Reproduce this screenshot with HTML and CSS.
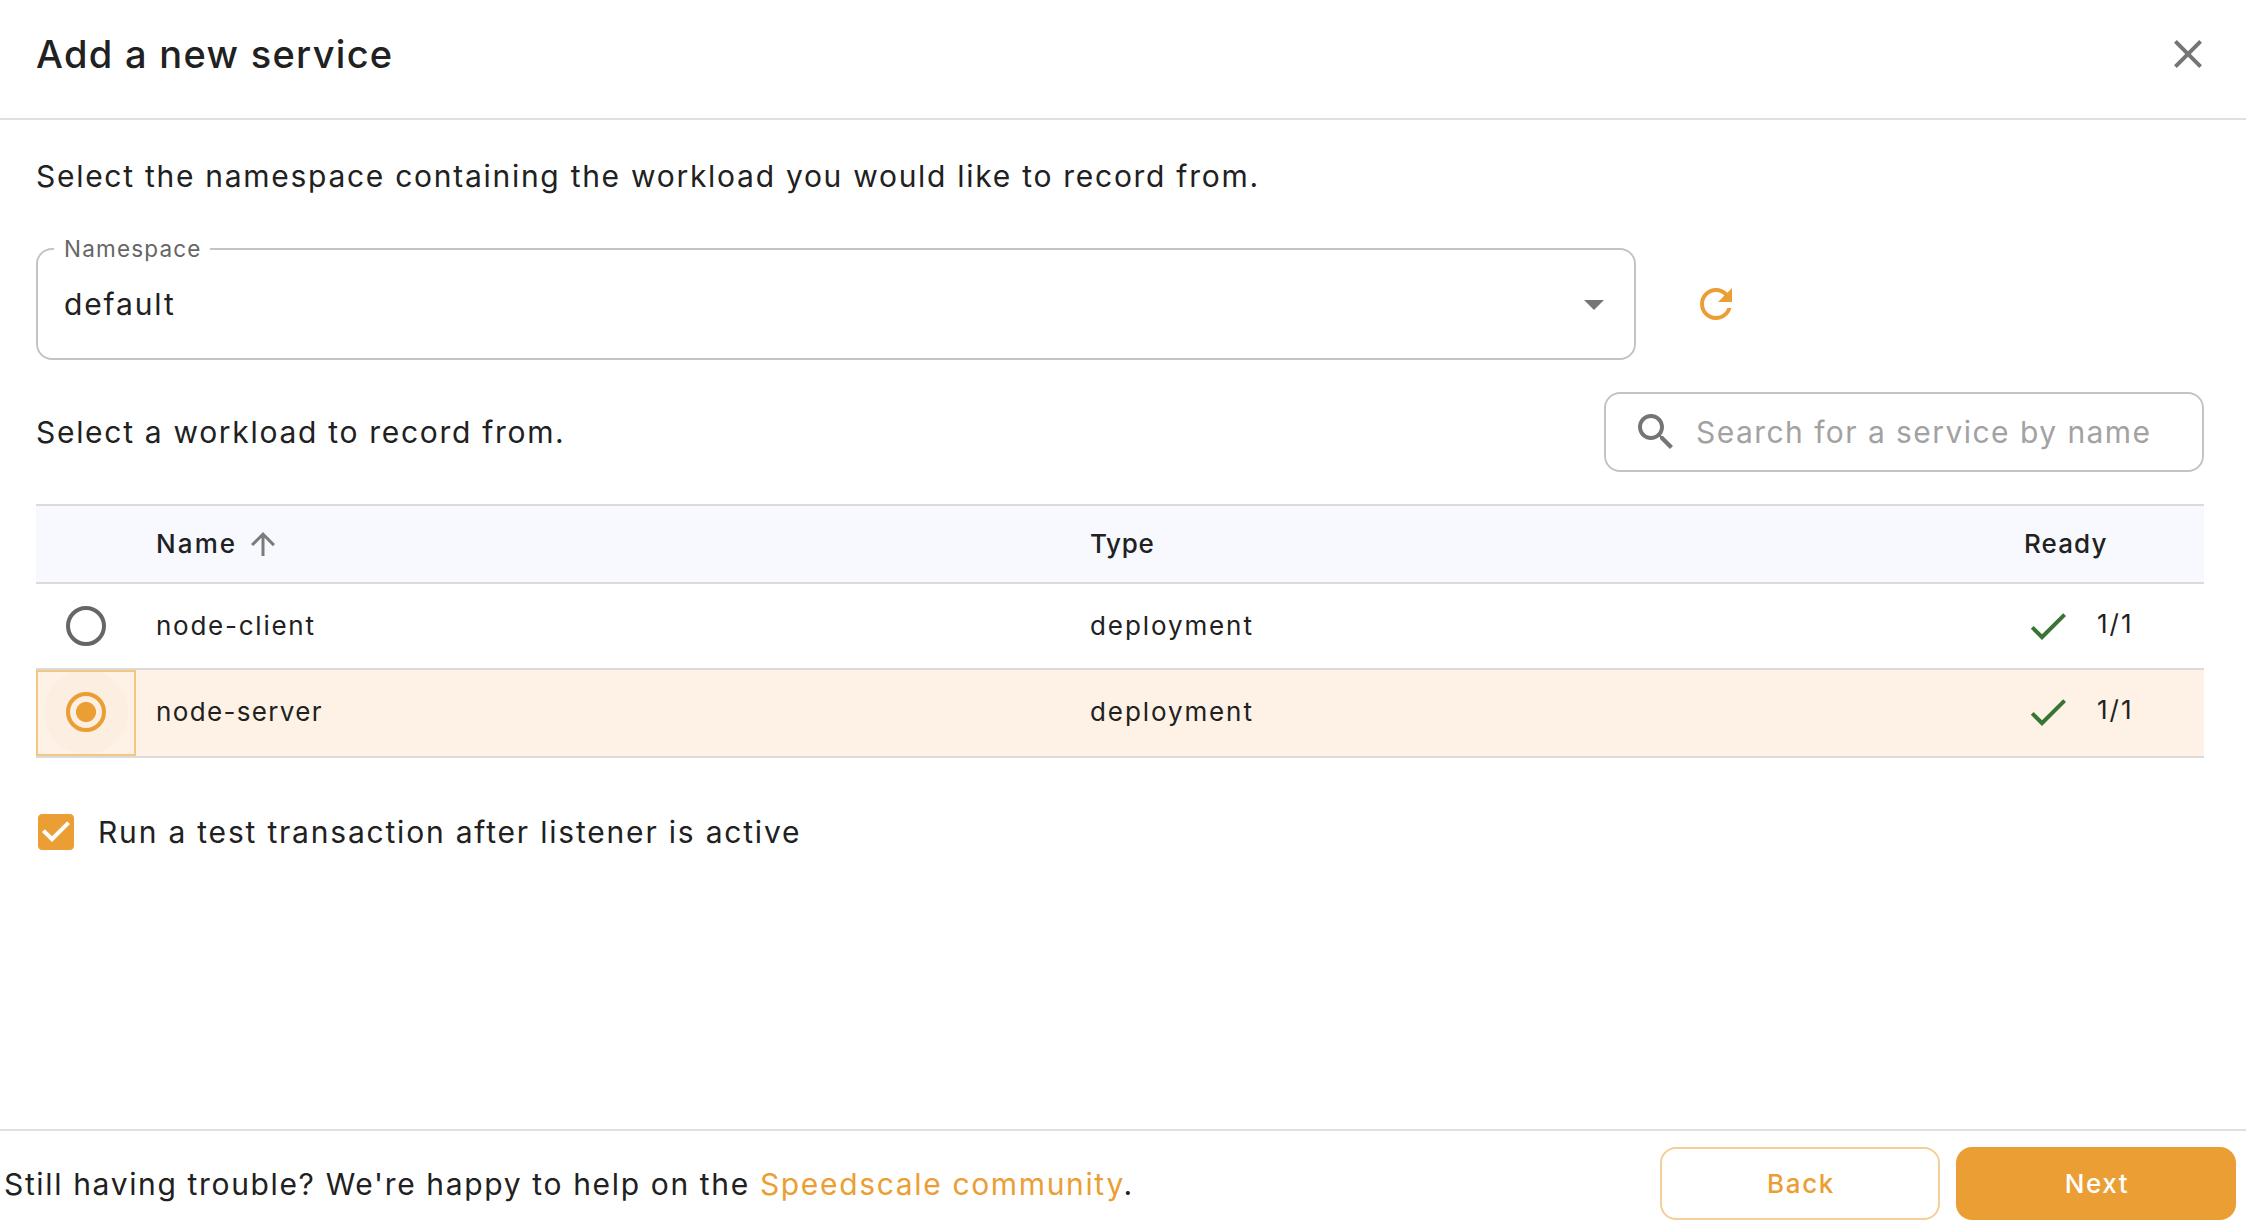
FILE: index.html
```html
<!DOCTYPE html>
<html lang="en">
<head>
<meta charset="utf-8">
<title>Add a new service</title>
<link rel="stylesheet" href="styles.css">
</head>
<body>
<div class="dialog">
  <header class="dialog-header">
    <h1 class="title">Add a new service</h1>
    <button class="icon-button" aria-label="Close">
      <svg class="icon" viewBox="0 0 24 24"><path d="M19 6.41 17.59 5 12 10.59 6.41 5 5 6.41 10.59 12 5 17.59 6.41 19 12 13.41 17.59 19 19 17.59 13.41 12z"/></svg>
    </button>
  </header>

  <main class="content">
    <p class="prompt prompt-namespace">Select the namespace containing the workload you would like to record from.</p>

    <div class="namespace-row">
      <fieldset class="select">
        <legend class="select-label">Namespace</legend>
        <div class="select-body">
          <span class="select-value">default</span>
          <svg class="icon" viewBox="0 0 24 24"><path d="m7 10 5 5 5-5z"/></svg>
        </div>
      </fieldset>
      <button class="icon-button refresh" aria-label="Refresh">
        <svg class="icon" viewBox="0 0 24 24"><path d="M17.65 6.35C16.2 4.9 14.21 4 12 4c-4.42 0-7.99 3.58-7.99 8s3.57 8 7.99 8c3.73 0 6.84-2.55 7.73-6h-2.08c-.82 2.33-3.04 4-5.65 4-3.31 0-6-2.69-6-6s2.69-6 6-6c1.66 0 3.14.69 4.22 1.78L13 11h7V4z"/></svg>
      </button>
    </div>

    <div class="workload-row">
      <p class="prompt prompt-workload">Select a workload to record from.</p>
      <div class="search">
        <svg class="icon" viewBox="0 0 24 24"><path d="M15.5 14h-.79l-.28-.27C15.41 12.59 16 11.11 16 9.5 16 5.91 13.09 3 9.5 3S3 5.91 3 9.5 5.91 16 9.5 16c1.61 0 3.09-.59 4.23-1.57l.27.28v.79l5 4.99L20.49 19zm-6 0C7.01 14 5 11.99 5 9.5S7.01 5 9.5 5 14 7.01 14 9.5 11.99 14 9.5 14"/></svg>
        <span class="placeholder">Search for a service by name</span>
      </div>
    </div>

    <div class="table">
      <div class="row row-head">
        <span></span>
        <span class="cell"><span class="th-name">Name</span><svg class="icon sort" viewBox="0 0 24 24"><path d="m4 12 1.41 1.41L11 7.83V20h2V7.83l5.58 5.59L20 12l-8-8z"/></svg></span>
        <span class="cell th-type">Type</span>
        <span class="cell th-ready">Ready</span>
      </div>
      <div class="row">
        <span class="cell-radio"><span class="radio"></span></span>
        <span class="cell td-client">node-client</span>
        <span class="cell td-type">deployment</span>
        <span class="cell"><svg class="icon check" viewBox="0 0 24 24"><path d="M9 16.17 4.83 12l-1.42 1.41L9 19 21 7l-1.41-1.41z"/></svg><span class="count">1/1</span></span>
      </div>
      <div class="row row-selected">
        <span class="cell-radio focused"><span class="ripple"><span class="radio checked"></span></span></span>
        <span class="cell td-server">node-server</span>
        <span class="cell td-type">deployment</span>
        <span class="cell"><svg class="icon check" viewBox="0 0 24 24"><path d="M9 16.17 4.83 12l-1.42 1.41L9 19 21 7l-1.41-1.41z"/></svg><span class="count">1/1</span></span>
      </div>
    </div>

    <label class="test-option">
      <svg class="icon checkbox" viewBox="0 0 24 24"><path d="M19 3H5c-1.11 0-2 .9-2 2v14c0 1.1.89 2 2 2h14c1.11 0 2-.9 2-2V5c0-1.1-.89-2-2-2m-9 14-5-5 1.41-1.41L10 14.17l7.59-7.59L19 8z"/></svg>
      <span class="test-label">Run a test transaction after listener is active</span>
    </label>
  </main>

  <footer class="dialog-footer">
    <p class="help">Still having trouble? We're happy to help on the <a class="link">Speedscale community</a>.</p>
    <button class="button button-outlined">Back</button>
    <button class="button button-filled">Next</button>
  </footer>
</div>
</body>
</html>
```
FILE: styles.css
```css
* { box-sizing: border-box; }

body {
  margin: 0;
  background: #fff;
  color: #212121;
  font-family: Inter, "Liberation Sans", sans-serif;
  font-size: 30px;
  line-height: 48px;
}

p, h1 { margin: 0; white-space: nowrap; }

.dialog {
  height: 1230px;
  display: flex;
  flex-direction: column;
}

.icon {
  width: 48px;
  height: 48px;
  flex: none;
  display: block;
  fill: #757575;
}

.icon-button {
  padding: 0;
  border: 0;
  background: none;
}

.dialog-header {
  height: 120px;
  padding: 30px 34px 0 36px;
  display: flex;
  justify-content: space-between;
  border-bottom: 2px solid #e0e0e0;
}

.title {
  font-size: 38px;
  font-weight: 500;
  letter-spacing: 1.3px;
}

.icon-button { height: 48px; }

.content {
  flex: 1;
  padding: 32px 42px 0 36px;
}

.prompt-namespace { letter-spacing: 1.72px; }
.prompt-workload { letter-spacing: 1.7px; }

.namespace-row {
  margin-top: 36px;
  height: 124px;
  display: flex;
  align-items: flex-end;
  gap: 56px;
}

.select {
  width: 1600px;
  height: 124px;
  margin: 0;
  padding: 0 16px 0 16px;
  min-width: 0;
  border: 2px solid #c4c4c4;
  border-radius: 16px;
}

.select-label {
  margin-left: 0;
  padding: 0 8px 0 10px;
  font-size: 22.5px;
  line-height: 26px;
  letter-spacing: 1.2px;
  color: #666;
}

.select-body {
  margin-top: 18px;
  padding: 0 0 0 10px;
  display: flex;
  justify-content: space-between;
}

.select-value { letter-spacing: 1.85px; }

.refresh { margin-bottom: 32px; }
.refresh .icon { fill: #eb9e34; }

.workload-row {
  margin-top: 32px;
  height: 80px;
  display: flex;
  align-items: center;
  justify-content: space-between;
}

.search {
  width: 600px;
  height: 80px;
  padding-left: 26px;
  display: flex;
  align-items: center;
  gap: 16px;
  border: 2px solid #c4c4c4;
  border-radius: 16px;
}

.placeholder {
  color: #a2a2a2;
  letter-spacing: 1.45px;
  white-space: nowrap;
}

.table {
  margin-top: 32px;
  border-top: 2px solid #dbdbdb;
  font-size: 26px;
}

.row {
  height: 86px;
  display: grid;
  grid-template-columns: 100px 934px 934px 200px;
  border-bottom: 2px solid #dbdbdb;
}

.row-head {
  height: 78px;
  background: #f8f9ff;
  font-weight: 500;
}

.row-selected {
  height: 88px;
  background: #fdf2e5;
}

.cell {
  padding-left: 20px;
  display: flex;
  align-items: center;
}

.row:not(.row-head) .cell { height: 84px; }

.th-name { letter-spacing: 2.1px; }
.th-type { letter-spacing: 0.7px; }
.th-ready { letter-spacing: 1.1px; }
.td-client { letter-spacing: 1.75px; }
.td-server { letter-spacing: 1.35px; }
.td-type { letter-spacing: 1.9px; }

.sort {
  width: 36px;
  height: 36px;
  margin-left: 8px;
  fill: #7b7b7b;
}

.check { fill: #387435; }

.count {
  margin: -4px 0 0 25px;
  letter-spacing: 2px;
}

.cell-radio {
  display: flex;
  align-items: center;
  justify-content: center;
}

.focused {
  border: 2px solid #f4c684;
  overflow: hidden;
}

.ripple {
  width: 84px;
  height: 84px;
  margin-top: -2px;
  flex: none;
  display: flex;
  align-items: center;
  justify-content: center;
  background: #fceee0;
  border-radius: 50%;
}

.radio {
  width: 40px;
  height: 40px;
  border: 4px solid #666;
  border-radius: 50%;
}

.checked {
  border-color: #eb9e34;
  background: radial-gradient(circle, #eb9e34 9.6px, transparent 10.4px);
}

.test-option {
  margin: 50px 0 0 -4px;
  display: flex;
  align-items: center;
  gap: 18px;
}

.checkbox { fill: #eb9e34; }
.test-label { letter-spacing: 1.8px; }

.dialog-footer {
  height: 101px;
  padding: 0 10px 0 4px;
  display: flex;
  align-items: center;
  gap: 16px;
  border-top: 2px solid #e0e0e0;
}

.help {
  flex: 1;
  padding-top: 7px;
  letter-spacing: 1.65px;
}

.link { color: #eb9e34; }

.button {
  width: 280px;
  height: 73px;
  margin-top: 6px;
  padding: 0 0 0 2px;
  border: 0;
  border-radius: 16px;
  font: 500 26px/48px Inter, "Liberation Sans", sans-serif;
  letter-spacing: 1.6px;
}

.button-outlined {
  border: 2px solid #f6ce97;
  background: #fff;
  color: #eb9e34;
}

.button-filled {
  background: #eb9e34;
  color: #fff;
}
```
